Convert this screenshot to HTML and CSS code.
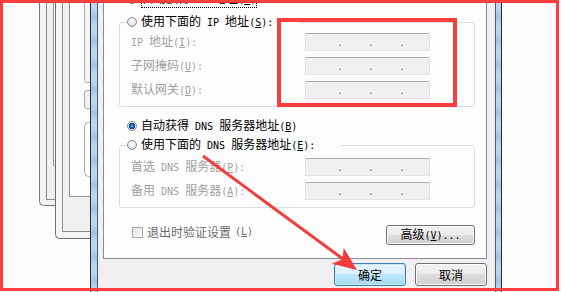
FILE: index.html
```html
<!DOCTYPE html>
<html lang="zh-CN">
    <head>
        <meta charset="UTF-8" />
        <title>Internet 协议版本 4 (TCP/IPv4) 属性</title>
        <link rel="stylesheet" href="styles.css">
    </head>
    <body>
        <div id="desktop">
            <!-- 后面叠着的几个窗口 -->
            <svg class="backWins" width="103" height="292" viewBox="0 0 103 292">
                <path d="M39.5 -2 V201.5 Q39.5 205.5 43.5 205.5 H103 V-2 Z" fill="#f3f3f3" stroke="#777" />
                <path d="M46.5 -2 V199.5 H103 V-2 Z" fill="#f0f0f0" stroke="#8c8c8c" />
                <path d="M53.5 -2 V165.5 H103 V-2 Z" fill="#fdfdfd" stroke="#909090" />
                <path d="M55.5 -2 V234.5 Q55.5 238.5 59.5 238.5 H103 V-2 Z" fill="#f3f6f6" stroke="#6e6e6e" />
                <path d="M62.5 -2 V231.5 H103 V-2 Z" fill="#f0f0f0" stroke="#8c8c8c" />
                <path d="M69.5 -2 V196.5 H103 V-2 Z" fill="#fdfdfd" stroke="#909090" />
                <path d="M84.5 -2 V80.5 Q84.5 82.5 86.5 82.5 H103 V-2 Z" fill="#f4f4f4" stroke="#ababab" />
                <rect x="84.5" y="90.5" width="20" height="18" rx="2.5" fill="#f2f2f2" stroke="#ababab" />
                <path d="M103 122.5 H88.5 Q84.5 122.5 84.5 126.5 V172.5 Q84.5 176.5 88.5 176.5 H103" fill="#fdfdfd" stroke="#ababab" />
            </svg>

            <div id="dialog">
                <div class="client">
                    <div class="panel">
                        <div class="opt indent">
                            <span class="radio on"></span>
                            <span class="focus">自动获得<span class="en"> IP </span>地址<span class="en">(<u>O</u>)</span></span>
                        </div>

                        <fieldset class="group">
                            <legend class="opt lgIp">
                                <span class="radio"></span>
                                <span>使用下面的<span class="en"> IP </span>地址<span class="en">(<u>S</u>):</span></span>
                            </legend>
                            <div class="rows">
                                <label><span class="en">IP </span>地址<span class="en">(<u>I</u>):</span></label>
                                <div class="ip"><i>.</i><i>.</i><i>.</i></div>
                                <label>子网掩码<span class="en">(<u>U</u>):</span></label>
                                <div class="ip"><i>.</i><i>.</i><i>.</i></div>
                                <label>默认网关<span class="en">(<u>D</u>):</span></label>
                                <div class="ip"><i>.</i><i>.</i><i>.</i></div>
                            </div>
                        </fieldset>

                        <div class="opt indent dnsAuto">
                            <span class="radio on"></span>
                            <span>自动获得<span class="en"> DNS </span>服务器地址<span class="en">(<u>B</u>)</span></span>
                        </div>

                        <fieldset class="group dnsGroup">
                            <legend class="opt lgDns">
                                <span class="radio"></span>
                                <span>使用下面的<span class="en"> DNS </span>服务器地址<span class="en">(<u>E</u>):</span></span>
                            </legend>
                            <div class="rows">
                                <label>首选<span class="en"> DNS </span>服务器<span class="en">(<u>P</u>):</span></label>
                                <div class="ip"><i>.</i><i>.</i><i>.</i></div>
                                <label>备用<span class="en"> DNS </span>服务器<span class="en">(<u>A</u>):</span></label>
                                <div class="ip"><i>.</i><i>.</i><i>.</i></div>
                            </div>
                        </fieldset>

                        <div class="checkRow">
                            <label class="check"><span class="box"></span>退出时验证设置<span class="en">(<u>L</u>)</span></label>
                            <button class="btn adv">高级<span class="en">(<u>V</u>)...</span></button>
                        </div>
                    </div>

                    <div class="btnBar">
                        <button class="btn def">确定</button>
                        <button class="btn">取消</button>
                    </div>
                </div>
            </div>

            <!-- 教程里画上去的红框和箭头 -->
            <div class="mark markIp"></div>
            <div class="mark markAll"></div>
            <svg class="arrow" width="561" height="292" viewBox="0 0 561 292">
                <line x1="203" y1="156" x2="343" y2="259" stroke="#f43c3c" stroke-width="3" />
                <polygon points="357,270 331.8,263.7 342.5,259.3 343.7,247.7" fill="#f43c3c" />
            </svg>
        </div>
    </body>
</html>
```

FILE: styles.css
```css
* {
    box-sizing: border-box;
}

body {
    margin: 0;
    background-color: #fbfbfb;
    font: 12px/16px "Noto Sans CJK SC", "Noto Sans CJK JP", sans-serif;
    color: #000;
}

#desktop {
    position: relative;
    width: 561px;
    height: 292px;
    overflow: hidden;
}

.backWins {
    position: absolute;
    left: 0;
    top: 0;
}

#dialog {
    position: absolute;
    left: 90px;
    top: -20px;
    width: 412px;
    height: 330px;
    border: 1px solid #2c2c2c;
    padding: 0 5px 0 6px;
    background: repeating-linear-gradient(180deg, #c0d8f2 0, #b2ccec 8px, #a2bfe5 12px, #b2ccec 16px, #c0d8f2 24px);
}

.client {
    height: 100%;
    border: 1px solid #4b5866;
    background-color: #f0f0f0;
    padding: 0 8px 0 5px;
}

.panel {
    height: 277px;
    border: 1px solid #898c95;
    background-color: #fdfdfd;
    padding: 8px 11px 0 15px;
}

.en {
    font-family: "DejaVu Sans Mono", monospace;
    font-size: 10px;
}

.opt {
    display: flex;
    align-items: center;
    gap: 4px;
    height: 16px;
    white-space: nowrap;
}

.indent {
    margin-left: 8px;
}

.focus {
    outline: 1px dotted #000;
    outline-offset: -1px;
    padding: 0 1px;
}

.radio {
    flex: none;
    width: 10px;
    height: 10px;
    border-radius: 50%;
    border: 1px solid #8a8a8a;
    background: radial-gradient(circle at 50% 35%, #fff 0, #f0f0f0 40%, #d0d0d0 100%);
}

.radio.on {
    background: radial-gradient(circle at 50% 50%, #6ab8f2 0, #1f6fc2 1.6px, #0c3f80 3px, #e6e6e6 3.4px, #f6f6f6 100%);
}

.group {
    margin: 7px 0 0;
    padding: 3px 0 7px 7px;
    border: 1px solid #d5dfe5;
    border-radius: 3px;
    min-width: 0;
}

.group legend {
    padding: 0;
    margin: 0;
}

.lgIp {
    width: 171px;
}

.lgDns {
    width: 213px;
}

.dnsAuto {
    margin-top: 11px;
}

.dnsGroup {
    margin-top: 3px;
    padding-top: 5px;
}

.rows {
    display: grid;
    grid-template-columns: 174px 125px;
    row-gap: 6px;
    align-items: center;
    padding-left: 4px;
    color: #a0a0a0;
    white-space: nowrap;
}

.ip {
    display: flex;
    gap: 27px;
    height: 18px;
    padding-left: 32px;
    border: 1px solid #e2e3ea;
    border-top-color: #abadb3;
    background-color: #f0f0f0;
    color: #6d6d6d;
    font-family: "Liberation Sans", sans-serif;
    line-height: 16px;
}

.ip i {
    width: 4px;
    font-style: normal;
    text-align: center;
}

.checkRow {
    display: flex;
    justify-content: space-between;
    align-items: flex-start;
    margin-top: 17px;
    padding-left: 13px;
}

.check {
    display: flex;
    align-items: center;
    gap: 4px;
    height: 14px;
    color: #6d6d6d;
}

.box {
    width: 11px;
    height: 11px;
    border: 1px solid #a9a9a9;
    background: linear-gradient(135deg, #e2e2e2, #fdfdfd);
}

.btn {
    width: 72px;
    height: 23px;
    padding: 0;
    border: 1px solid #707070;
    border-radius: 3px;
    background: linear-gradient(#f2f2f2, #ebebeb 50%, #dddddd 50%, #cfcfcf);
    box-shadow: inset 0 0 0 1px #fbfbfb;
    font: inherit;
    color: #000;
}

.btn.def {
    border-color: #3c7fb1;
    background: linear-gradient(#eaf6fd, #d9f0fc 50%, #bee6fd 50%, #a7d9f5);
    box-shadow: inset 0 0 0 1px #c8e8f9;
}

.btn.adv {
    width: 89px;
    height: 20px;
}

.btnBar {
    display: flex;
    justify-content: flex-end;
    gap: 9px;
    margin-top: 4px;
}

.mark {
    position: absolute;
    border: 3px solid #fc3d3d;
}

.markAll {
    left: 0;
    top: 0;
    width: 559px;
    height: 291px;
}

.markIp {
    left: 277px;
    top: 18px;
    width: 180px;
    height: 89px;
    border-width: 4px;
}

.arrow {
    position: absolute;
    left: 0;
    top: 0;
    pointer-events: none;
}
```
